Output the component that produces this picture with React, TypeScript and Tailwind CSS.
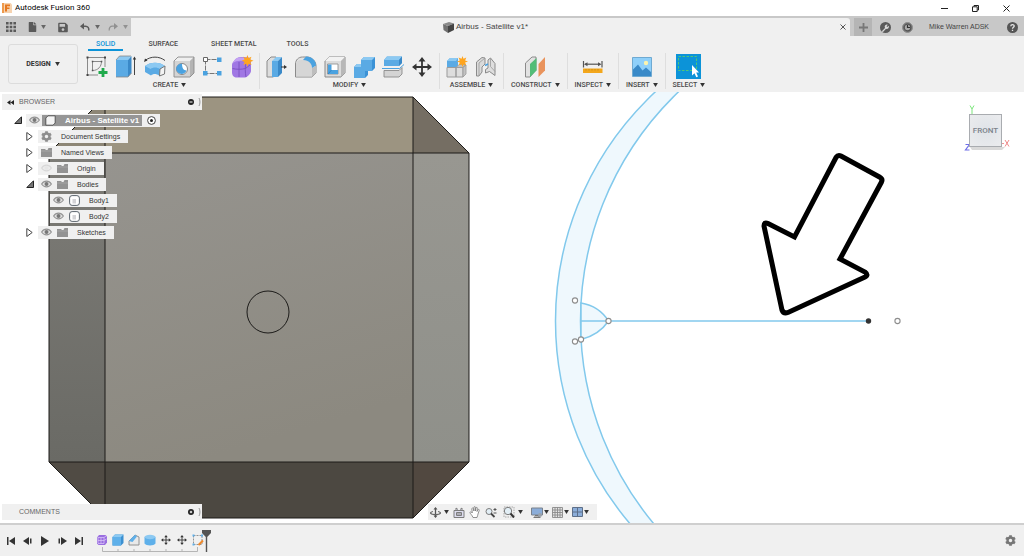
import type { ReactNode } from 'react';
import { FaCog, FaFile, FaFolder, FaSave } from 'react-icons/fa';

type IconProps = { children: ReactNode; size?: string; box?: string };

function Svg({ children, size = 'h-6 w-6', box = '0 0 24 24' }: IconProps) {
  return (
    <svg viewBox={box} className={`${size} block shrink-0`} fill="none" aria-hidden="true">
      {children}
    </svg>
  );
}

function Caret({ className = 'text-[#333]' }: { className?: string }) {
  return (
    <svg viewBox="0 0 6 5" className={`block h-[4px] w-[5px] shrink-0 ${className}`} aria-hidden="true">
      <path d="M0 0h6L3 5z" fill="currentColor" />
    </svg>
  );
}

/* ---------- ribbon icons ---------- */

const SketchIcon = (
  <Svg>
    <path d="M3 2.500h17M2.500 3v17M3 20h10M20 3v9" stroke="#8a8a8a" strokeWidth="1" />
    <path d="M1.500 1.500h2v2h-2zM19 1.500h2v2h-2zM1.500 19h2v2h-2z" fill="#444" />
    <path d="M7.500 6.500h9c0 5-3.500 9-9 9z" stroke="#888" strokeWidth="1" />
    <path d="M6.800 5.800h1.500v1.500H6.800zM15.800 5.800h1.500v1.500h-1.500zM6.800 14.800h1.500v1.500H6.800z" fill="#555" />
    <path d="M18 13v9M13.500 17.500h9" stroke="#1faa4b" strokeWidth="2.800" />
  </Svg>
);

const ExtrudeIcon = (
  <Svg>
    <path d="M2 5l3.500-4H17l-3 4z" fill="#8cc9f2" />
    <path d="M2 5h12v17H2z" fill="#5aaae4" />
    <path d="M14 5l3.500-4v17L14 22z" fill="#3a89c8" />
    <path d="M2 5l3.500-4H17M2 22h12l3.500-4" stroke="#888" strokeWidth=".8" />
    <path d="M20.500 20V4" stroke="#444" />
    <path d="M18.800 4.500l1.700-3 1.700 3z" fill="#333" />
  </Svg>
);

const RevolveIcon = (
  <Svg>
    <path d="M2 5.500C8 1 16 1 22 5.500" stroke="#444" />
    <path d="M1 7l1-3.500 2.500 2z" fill="#333" />
    <path d="M2 11c5-4.500 15-4.500 20 0l-1 8-5 1.500c-2.500-2-6-2-8 0L2 17z" fill="#5aaae4" />
    <path d="M2 11c5-4.500 15-4.500 20 0l-5 3c-3-2-7-2-9.500 0z" fill="#8cc9f2" />
    <path d="M17 14l5-3-.5 8-5 2z" fill="#f4f4f4" stroke="#777" />
  </Svg>
);

const HoleIcon = (
  <Svg>
    <path d="M2 6l4-4h16v16l-4 4H2z" fill="#d4d4d4" />
    <path d="M2 6l4-4h16l-4 4z" fill="#efefef" />
    <path d="M18 6l4-4v16l-4 4z" fill="#b4b4b4" />
    <path d="M2 6l4-4h16v16l-4 4H2z" stroke="#8b8b8b" strokeWidth=".9" />
    <circle cx="10" cy="14" r="5.500" fill="#fff" stroke="#888" />
    <path d="M10 8.800a5 5 0 0 0-1.500 10c2.500.5 5-.8 6-3.300C11.500 15.500 10 13 10 8.800z" fill="#4aa2e0" />
  </Svg>
);

const PatternIcon = (
  <Svg>
    <path d="M4.500 4.500h14M4.500 4.500v14h14" stroke="#777" strokeWidth="1" strokeDasharray="5 1" />
    <path d="M2.500 2.500h4v4h-4z" fill="#fff" stroke="#666" />
    <path d="M16 2.500h4.500V7H16zM2 16h4.500v4.500H2zM16 16h4.500v4.500H16z" fill="#4aa2e0" />
  </Svg>
);

const FormIcon = (
  <Svg>
    <path d="M4 6c2-3 4-4 7-4h5c3 0 5 2 5 5v9c0 2-3 6-6 6.500H7c-3 0-5-2-5-5V10c0-2 1-3 2-4z" fill="#a077e4" />
    <path d="M3 8c3-2.500 9-3 15-1 1-2 1-3 0-4.500h-8C6 2.500 4 5 3 8z" fill="#c3a2f2" />
    <path d="M2.500 13.500c4 1 9 1 13 0l5-4M9 7v15M16 7c-1 5-1 10 0 15" stroke="#7a50c0" strokeWidth=".9" />
    <path d="M17.500 0l1 3 3-1.300L20.300 4.600l3.200 1.200-3.200 1.200 1.200 3-3-1.200-1 3-1.200-3-3 1.200 1.300-3-3-1.200 3-1.200-1.300-2.900 3 1.300z" fill="#ffa51f" />
  </Svg>
);

const PressPullIcon = (
  <Svg>
    <path d="M2 6l4-4h5v18l-3 2H2z" fill="#ddd" stroke="#8b8b8b" />
    <path d="M7 6l4-4h6l-4 4z" fill="#8cc9f2" />
    <path d="M7 6h6v16H7z" fill="#5aaae4" />
    <path d="M13 6l4-4v16l-4 4z" fill="#3a89c8" />
    <path d="M16 12h4" stroke="#333" />
    <path d="M19 10l3 2-3 2z" fill="#333" />
  </Svg>
);

const FilletIcon = (
  <Svg>
    <path d="M1.500 9c0-4 3-7 7-7H14c5 1 8 5 8 9v7l-4 4H1.500z" fill="#e2e2e2" stroke="#8b8b8b" />
    <path d="M2 9c0-2 2-4 5-4h3c5 0 8 3 8 8v8.500H2z" fill="#d6d6d6" />
    <path d="M18 13l4-2v7l-4 4z" fill="#bdbdbd" />
    <path d="M9 5l3-3.500c6 0 10 4 10 9L18 13c0-4-3-8-9-8z" fill="#4aa2e0" />
  </Svg>
);

const ShellIcon = (
  <Svg>
    <path d="M2 6l4-4h16v16l-4 4H2z" fill="#dcdcdc" stroke="#8b8b8b" />
    <path d="M2 6l4-4h16l-4 4z" fill="#f2f2f2" />
    <path d="M18 6l4-4v16l-4 4z" fill="#b7b7b7" />
    <path d="M4.500 9H15v10H4.500z" fill="#fff" stroke="#888" strokeWidth=".8" />
    <path d="M5 9.500h3.500V15H15v4H5z" fill="#4aa2e0" />
    <path d="M5 19l3.500-4" stroke="#2f7fc0" strokeWidth=".8" />
  </Svg>
);

const CombineIcon = (
  <Svg>
    <path d="M2 12l3-3h4V5l3-3h11v11l-3 3h-4v4l-3 3H2z" fill="#3b92d6" />
    <path d="M2 12l3-3h4v3zM9 5l3-3h11l-3 3z" fill="#8cc9f2" />
    <path d="M2 12h7V5h11v11h-7v7H2z" fill="#5aaae4" />
  </Svg>
);

const SplitIcon = (
  <Svg>
    <path d="M3 5l3-3.500h15V8l-3 3H3z" fill="#5aaae4" />
    <path d="M3 5l3-3.500h15L18 5z" fill="#8cc9f2" />
    <path d="M18 5l3-3.500V8l-3 3z" fill="#3a89c8" />
    <path d="M1 13.500h17.500L23 9.500" stroke="#4aa2e0" />
    <path d="M3 15.500h15l3-3V19l-3 3H3z" fill="#d4d4d4" stroke="#8b8b8b" strokeWidth=".9" />
  </Svg>
);

const MoveShape = (
  <>
    <path d="M12 5v14M5 12h14" stroke="#333" strokeWidth="1.800" />
    <path d="M12 2l3.500 4.500h-7zM12 22l3.500-4.500h-7zM2 12l4.500-3.500v7zM22 12l-4.500-3.500v7z" fill="#333" />
  </>
);

const MoveIcon = <Svg>{MoveShape}</Svg>;

const ComponentIcon = (
  <Svg>
    <path d="M2 6l3-3h8v9H2z" fill="#5aaae4" />
    <path d="M2 6l3-3h8l-2 3z" fill="#8cc9f2" />
    <path d="M2 12.500h9V22H2zM11 12.500h7V22h-7z" fill="#ddd" stroke="#9b9b9b" />
    <path d="M18 12.500l3-2.500v9l-3 3zM11 12.500l3-3h6.500l-2.500 3z" fill="#c2c2c2" stroke="#9b9b9b" strokeWidth=".8" />
    <path d="M17.500 1l1 2.800 2.800-1.200-1.200 2.800 2.900 1.100-2.900 1.100 1.200 2.800-2.800-1.200-1 2.800-1-2.800-2.900 1.200 1.200-2.800L12 6.500l2.800-1.100-1.200-2.800 2.900 1.200z" fill="#ffa51f" />
  </Svg>
);

const JointIcon = (
  <Svg>
    <path d="M2.500 7L8 2.500l3 .5v6l-3 3v5l-3 4H2.500z" fill="#dadada" stroke="#8b8b8b" />
    <path d="M5 8l6-5M5 8v12.500" stroke="#9b9b9b" strokeWidth=".8" />
    <path d="M21 20.500v-12L16.500 3 14 5v8l-2.500 1.500V18l4-1.500z" fill="#dedede" stroke="#8b8b8b" />
    <path d="M16.500 3v8.500l4.500 5" stroke="#9b9b9b" strokeWidth=".8" />
    <path d="M11 10.500l3-1.500" stroke="#4aa2e0" strokeWidth="1.500" />
  </Svg>
);

const ConstructIcon = (
  <Svg>
    <path d="M2.500 8L9 2h4v13l-6 7H2.500z" fill="#e2e2e2" stroke="#8b8b8b" />
    <path d="M7 9l6.500-6v12.500L7 22z" fill="#52bd77" />
    <path d="M15.500 9L22 2v13.500L15.500 22z" fill="#e9935c" />
  </Svg>
);

const InspectIcon = (
  <Svg>
    <path d="M2.500 6v6.500M21 6v6.500" stroke="#555" strokeWidth="1.200" />
    <path d="M4 9.200h15" stroke="#555" strokeWidth="1.200" />
    <path d="M3 9.200l3.500-2v4zM20.500 9.200l-3.500-2v4z" fill="#555" />
    <path d="M2 13.500h19.500v4.500H2z" fill="#f3a71c" />
    <path d="M5 14v1.500M8 14v1.500M11 14v1.500M14 14v1.500M17 14v1.500" stroke="#b57c10" strokeWidth=".6" />
  </Svg>
);

const InsertIcon = (
  <Svg>
    <path d="M2.500 2.500h19v19h-19z" fill="#8fd0fa" stroke="#5b9cc9" strokeWidth=".8" />
    <circle cx="16" cy="8" r="2.200" fill="#fbf3ae" />
    <path d="M3 14.500l5-5 4.500 6 3.500-3 5 4.500v4H3z" fill="#3a8ac8" />
  </Svg>
);

const SelectIcon = (
  <Svg size="h-[25px] w-[25px]" box="0 0 25 25">
    <path d="M0 0h25v25H0z" fill="#0c93d8" />
    <path d="M2.500 2.500h18v14h-18z" stroke="#4cc778" strokeDasharray="2.500 1.500" />
    <path d="M16 11v10.500l2.500-2.300 1.800 4 1.700-.8-1.800-3.900H23z" fill="#fff" />
  </Svg>
);

type Group = { label: string; icons: ReactNode[] };

const groups: Group[] = [
  { label: 'CREATE', icons: [SketchIcon, ExtrudeIcon, RevolveIcon, HoleIcon, PatternIcon, FormIcon] },
  { label: 'MODIFY', icons: [PressPullIcon, FilletIcon, ShellIcon, CombineIcon, SplitIcon, MoveIcon] },
  { label: 'ASSEMBLE', icons: [ComponentIcon, JointIcon] },
  { label: 'CONSTRUCT', icons: [ConstructIcon] },
  { label: 'INSPECT', icons: [InspectIcon] },
  { label: 'INSERT', icons: [InsertIcon] },
  { label: 'SELECT', icons: [SelectIcon] },
];

/* ---------- header ---------- */

function TitleBar() {
  return (
    <div className="flex h-4 items-center bg-white pr-[14px] pl-[2px] text-black">
      <Svg size="h-[10px] w-[10px]" box="0 0 10 10">
        <path d="M0 0h8.500L10 1.500V10H0z" fill="#f6d3b0" />
        <path d="M3 8.500v-7h5v1.800H5v1.200h2.500v1.600H5v2.400z" fill="#e5781f" />
        <path d="M0 0h2v10H0z" fill="#ee9a4d" />
      </Svg>
      <span className="ml-[3px] font-['Roboto',sans-serif] text-[8px] leading-4">Autodesk Fusion 360</span>
      <div className="ml-auto flex items-center gap-6">
        <button aria-label="Minimize">
          <Svg size="h-[7px] w-[7px]" box="0 0 7 7"><path d="M0 3.500h7" stroke="#222" /></Svg>
        </button>
        <button aria-label="Restore">
          <Svg size="h-[7px] w-[7px]" box="0 0 7 7">
            <path d="M.5 1.800h4.700v4.700H.5zM2 1.500v-1h4.500V5H5.500" stroke="#222" />
          </Svg>
        </button>
        <button aria-label="Close">
          <Svg size="h-[7px] w-[7px]" box="0 0 7 7"><path d="M.5.5l6 6M6.500.5l-6 6" stroke="#222" /></Svg>
        </button>
      </div>
    </div>
  );
}

function DocumentBar() {
  return (
    <div className="flex h-5 bg-[#c8c8c8] pt-[2px] text-[#5a5a5a]">
      <div className="flex w-[131px] shrink-0 items-center pl-[6px]">
        <button aria-label="Data panel">
          <Svg size="h-[10px] w-[10px]" box="0 0 10 10">
            <path d="M0 0h2.600v2.600H0zM3.700 0h2.600v2.600H3.700zM7.400 0H10v2.600H7.400zM0 3.700h2.600v2.600H0zM3.700 3.700h2.600v2.600H3.700zM7.400 3.700H10v2.600H7.400zM0 7.400h2.600V10H0zM3.700 7.400h2.600V10H3.700zM7.400 7.400H10V10H7.400z" fill="currentColor" />
          </Svg>
        </button>
        <button aria-label="File" className="ml-3 flex items-center gap-1">
          <FaFile className="h-[10px] w-[9px]" />
          <Caret className="text-[#666]" />
        </button>
        <button aria-label="Save" className="ml-3">
          <FaSave className="h-[11px] w-[10px]" />
        </button>
        <button aria-label="Undo" className="ml-3 flex items-center gap-[5px]">
          <Svg size="h-[8px] w-[10px]" box="0 0 10 8">
            <path d="M2 3.200h3.500C8 3.200 9 5 8.800 7.500" stroke="currentColor" strokeWidth="1.500" />
            <path d="M0 3.200L4 0v6.400z" fill="currentColor" />
          </Svg>
          <Caret className="text-[#666]" />
        </button>
        <button aria-label="Redo" className="ml-2 flex items-center gap-[5px] text-[#919191]">
          <Svg size="h-[8px] w-[10px]" box="0 0 10 8">
            <path d="M8 3.200H4.500C2 3.200 1 5 1.200 7.500" stroke="currentColor" strokeWidth="1.200" />
            <path d="M10 3.200L6 0v6.400z" fill="currentColor" />
          </Svg>
          <Caret className="text-[#919191]" />
        </button>
      </div>
      <div className="flex flex-1 items-center rounded-tr-[3px] bg-[#f0f0f0] pr-1">
        <div className="flex flex-1 items-center justify-center gap-[2px]">
          <Svg size="h-[11px] w-[11px]" box="0 0 11 11">
            <path d="M0 2l6-2 5 1.500L5 4z" fill="#8a8a8a" />
            <path d="M0 2l5 2v7L.5 8z" fill="#707070" />
            <path d="M5 4l6-2.500v6.500L5 11z" fill="#444" />
          </Svg>
          <span className="text-[8px] leading-4 text-[#444]">Airbus - Satellite v1*</span>
        </div>
        <button aria-label="Close document" className="text-[#555]">
          <Svg size="h-[6px] w-[6px]" box="0 0 6 6"><path d="M.5.5l5 5M5.500.5l-5 5" stroke="currentColor" /></Svg>
        </button>
      </div>
      <button aria-label="New document" className="ml-1 flex w-[18px] items-center justify-center bg-[#b5b5b5]">
        <Svg size="h-[9px] w-[9px]" box="0 0 9 9"><path d="M4.500 0v9M0 4.500h9" stroke="#777" strokeWidth="1.800" /></Svg>
      </button>
      <div className="flex w-[152px] items-center pr-[6px] pl-2">
        <button aria-label="Extensions">
          <Svg size="h-[11px] w-[11px]" box="0 0 11 11">
            <circle cx="5.500" cy="5.500" r="5.500" fill="#5a5a5a" />
            <path d="M1.500 9.500L5 6a2.300 2.300 0 0 1 2.800-3.300L6.500 4.300l.8.8 1.500-1.300A2.300 2.300 0 0 1 6 6.800L3 10z" fill="#d8d8d8" />
          </Svg>
        </button>
        <button aria-label="Job status" className="ml-[11px]">
          <Svg size="h-[11px] w-[11px]" box="0 0 11 11">
            <circle cx="5.500" cy="5.500" r="5" fill="#777" stroke="#8e8e8e" />
            <circle cx="5.500" cy="5.500" r="3.300" fill="#aaa" stroke="#555" strokeWidth="1.300" />
            <path d="M5.500 3v2.500H8" stroke="#333" strokeWidth="1.200" />
          </Svg>
        </button>
        <button className="ml-4 text-[7px] leading-4 whitespace-nowrap text-[#444]">Mike Warren ADSK</button>
        <button aria-label="Help" className="ml-auto">
          <Svg size="h-[11px] w-[11px]" box="0 0 11 11">
            <circle cx="5.500" cy="5.500" r="5.500" fill="#555" />
            <path d="M3.800 4.300c0-2.300 3.400-2.200 3.400-.2 0 1.300-1.700 1.200-1.700 2.700M5.500 7.700v1.300" stroke="#e6e6e6" strokeWidth="1.300" />
          </Svg>
        </button>
      </div>
    </div>
  );
}

function Ribbon() {
  return (
    <div className="flex h-14 bg-[#f0f0f0] pl-2 font-['Roboto',sans-serif] text-[7px] font-medium text-[#4a4a4a]">
      <button className="mt-2 flex h-10 w-[70px] shrink-0 items-center justify-center gap-1 rounded-[3px] border border-[#dcdcdc] font-bold text-[#333]">
        DESIGN <Caret />
      </button>
      <div className="ml-[2px] flex flex-col pt-[2px]">
        <div className="flex h-[13px] gap-4 pl-2 leading-3" role="tablist">
          <button role="tab" aria-selected="true" className="border-b-2 border-[#0c93d8] px-2 text-[#0c93d8]">SOLID</button>
          <button role="tab" aria-selected="false" className="border-b-2 border-transparent px-[9px]">SURFACE</button>
          <button role="tab" aria-selected="false" className="border-b-2 border-transparent px-2">SHEET METAL</button>
          <button role="tab" aria-selected="false" className="border-b-2 border-transparent px-[6px]">TOOLS</button>
        </div>
        <div className="flex pt-[2px]">
          {groups.map((g) => (
            <div
              key={g.label}
              className="flex h-9 flex-col items-center border-r border-[#dedede] px-[5px] last:border-transparent"
            >
              <div className="flex h-[27px] shrink-0 items-center gap-[5px]">
                {g.icons.map((icon, i) => (
                  <button key={i} aria-label={`${g.label} tool ${i + 1}`}>{icon}</button>
                ))}
              </div>
              <button className="flex items-center gap-[3px] px-[2px] leading-[10px]">
                {g.label} <Caret />
              </button>
            </div>
          ))}
        </div>
      </div>
    </div>
  );
}

/* ---------- scene ---------- */

function Scene() {
  return (
    <svg
      viewBox="0 92 1024 431"
      preserveAspectRatio="xMidYMid slice"
      className="absolute inset-0 h-full w-full"
      role="img"
      aria-label="Satellite body and sketch profile"
    >
      <defs>
        <linearGradient id="front" x1="0" y1="0" x2="0.300" y2="1">
          <stop offset="0" stopColor="#96948f" />
          <stop offset="1" stopColor="#8c8980" />
        </linearGradient>
        <linearGradient id="left" x1="0" y1="0" x2="0" y2="1">
          <stop offset="0" stopColor="#7d7c77" />
          <stop offset="1" stopColor="#6a6a65" />
        </linearGradient>
        <linearGradient id="right" x1="0" y1="0" x2="0" y2="1">
          <stop offset="0" stopColor="#989791" />
          <stop offset="1" stopColor="#8f908a" />
        </linearGradient>
      </defs>
      <path d="M105 97H413V153H105z" fill="#9c9481" />
      <path d="M105 97V153H49z" fill="#8d8676" />
      <path d="M413 97L469 153H413z" fill="#756e63" />
      <path d="M105 153H413V462H105z" fill="url(#front)" />
      <path d="M49 153H105V462H49z" fill="url(#left)" />
      <path d="M413 153H469V462H413z" fill="url(#right)" />
      <path d="M105 462H413V518H105z" fill="#4c4841" />
      <path d="M49 462H105V518z" fill="#504b44" />
      <path d="M413 462H469L413 518z" fill="#514840" />
      <path
        d="M105 97H413L469 153V462L413 518H105L49 462V153zM49 153H469M49 462H469M105 97V518M413 97V518"
        fill="none"
        stroke="#1c1b19"
        strokeWidth="1"
      />
      <circle cx="268" cy="312" r="21" fill="none" stroke="#1c1b19" strokeWidth="1" />

      <g stroke="#82c9ec" strokeWidth="1.500">
        <path
          d="M868.500 8A313 313 0 0 0 868.500 634L897.500 638A317 317 0 0 1 897.500 4z"
          fill="#eff8fd"
        />
        <path d="M581 303Q599 306 608.500 321Q599 335 581 339.500z" fill="#eff8fd" />
        <path d="M581 321H868" />
      </g>
      <g fill="#fff" stroke="#8d8d8d" strokeWidth="1.100">
        <circle cx="575" cy="300.500" r="2.600" />
        <circle cx="575" cy="341.500" r="2.600" />
        <circle cx="581" cy="339.500" r="2.600" />
        <circle cx="608.500" cy="321" r="2.600" />
        <circle cx="897.500" cy="321" r="2.600" />
      </g>
      <circle cx="868.500" cy="321" r="2.700" fill="#333" />

      <path
        d="M836 157.500Q838 154.500 841 156L879.500 177Q883 179 881.500 182L840 259L865 272Q869 275 865 277L788 312.500Q783.500 314 782 310L764 226Q764 221.500 768 223.500L794.500 237z"
        fill="#fff"
        stroke="#000"
        strokeWidth="5"
      />
    </svg>
  );
}

function ViewCube() {
  return (
    <div className="absolute top-3 right-[14px] h-[50px] w-[46px]">
      <svg viewBox="0 0 46 50" className="absolute inset-0 h-full w-full" aria-hidden="true">
        <path d="M6 43h35l-3 3H8z" fill="#d9d9d9" />
        <path d="M8 5v6M6 1.500l2 3.500 2-3.500" stroke="#7ce67c" fill="none" />
        <path d="M38 39.500h2" stroke="#f09a9a" />
        <path d="M41 36l4 6.500M45 36l-4 6.500" stroke="#ef8a8a" />
        <path d="M1.500 40.500h4l-4 5.500h4" stroke="#6f6fe8" fill="none" strokeWidth="1.200" />
      </svg>
      <button className="absolute top-[10px] left-[5px] h-[33px] w-[33px] border border-[#a9acb0] bg-radial from-[#dfe3e8] to-[#ebecee] text-center font-['Roboto',sans-serif] text-[8px] font-medium text-[#7c838b]">
        FRONT
      </button>
    </div>
  );
}

/* ---------- browser tree ---------- */

function Eye({ faded = false }: { faded?: boolean }) {
  return (
    <Svg size="h-[8px] w-[11px]" box="0 0 11 8">
      <g className={faded ? 'opacity-25' : ''}>
        <path d="M.6 4C3 .2 8 .2 10.400 4 8 7.800 3 7.800.6 4z" fill="#e4e4e4" stroke="#959595" strokeWidth="1.100" />
        <circle cx="5.500" cy="4" r="2" fill={faded ? '#ccc' : '#777'} />
      </g>
    </Svg>
  );
}

function BodyGlyph() {
  return (
    <Svg size="h-[11px] w-[11px]" box="0 0 11 11">
      <rect x=".6" y=".6" width="9.800" height="9.800" rx="2.500" fill="#fff" stroke="#59626b" strokeWidth="1" />
      <path d="M3.500 4h3.500v4.500H3.500z" fill="#d3d3d6" />
    </Svg>
  );
}

function ComponentGlyph() {
  return (
    <Svg size="h-[11px] w-[11px]" box="0 0 11 11">
      <path d="M.8 3L3 .8h7.200V8L8 10.200H.8z" fill="#f4f4f4" stroke="#555" strokeWidth="1" />
    </Svg>
  );
}

function FolderGlyph() {
  return (
    <Svg size="h-[9px] w-[11px]" box="0 0 11 9">
      <path d="M0 1h4l1 1h1.500L7.500 0H11v9H0z" fill="#939393" />
      <path d="M0 3h11" stroke="#a9a9a9" strokeWidth=".8" />
    </Svg>
  );
}

type Row = {
  label: string;
  indent: string;
  toggle?: 'open' | 'closed';
  eye?: 'on' | 'off';
  glyph: 'component' | 'gear' | 'folder' | 'body';
};

const rows: Row[] = [
  { label: 'Airbus - Satellite v1', indent: 'pl-3', toggle: 'open', eye: 'on', glyph: 'component' },
  { label: 'Document Settings', indent: 'pl-6', toggle: 'closed', glyph: 'gear' },
  { label: 'Named Views', indent: 'pl-6', toggle: 'closed', glyph: 'folder' },
  { label: 'Origin', indent: 'pl-6', toggle: 'closed', eye: 'off', glyph: 'folder' },
  { label: 'Bodies', indent: 'pl-6', toggle: 'open', eye: 'on', glyph: 'folder' },
  { label: 'Body1', indent: 'pl-9', eye: 'on', glyph: 'body' },
  { label: 'Body2', indent: 'pl-9', eye: 'on', glyph: 'body' },
  { label: 'Sketches', indent: 'pl-6', toggle: 'closed', eye: 'on', glyph: 'folder' },
];

function TreeRow({ row }: { row: Row }) {
  const root = row.glyph === 'component';
  return (
    <li className={`flex h-4 items-center ${row.indent}`}>
      <button aria-label={`Toggle ${row.label}`} className="flex w-[14px] shrink-0 items-center pl-[2px]">
        {row.toggle === 'closed' && (
          <Svg size="h-[9px] w-[7px]" box="0 0 7 9">
            <path d="M.8.5v8L6.200 4.500z" fill="#fff" stroke="#444" />
          </Svg>
        )}
        {row.toggle === 'open' && (
          <Svg size="h-[8px] w-[8px]" box="0 0 8 8">
            <path d="M7.500.8v6.700H.8z" fill="#777" stroke="#222" />
          </Svg>
        )}
      </button>
      <div className="flex h-[13px] items-center bg-[#f0f0f0]">
        {row.eye && (
          <button aria-label={`Show ${row.label}`} className="flex w-4 shrink-0 justify-center">
            <Eye faded={row.eye === 'off'} />
          </button>
        )}
        <div className={`flex h-[11px] items-center ${root ? 'bg-[#969696] text-white' : ''}`}>
          <span className="flex w-4 shrink-0 justify-center">
            {row.glyph === 'component' && <ComponentGlyph />}
            {row.glyph === 'body' && <BodyGlyph />}
            {row.glyph === 'folder' && <FolderGlyph />}
            {row.glyph === 'gear' && <FaCog className="h-[11px] w-[11px] text-[#8e8e8e]" />}
          </span>
          <span className={`pl-[7px] leading-[11px] whitespace-nowrap ${root ? 'pr-[3px] text-[8px] font-bold' : 'pr-2 text-[7px]'}`}>
            {row.label}
          </span>
        </div>
        {root && (
          <button aria-label="Activate component" className="flex w-[18px] justify-center">
            <Svg size="h-[9px] w-[9px]" box="0 0 9 9">
              <circle cx="4.500" cy="4.500" r="3.900" fill="#fff" stroke="#444" />
              <circle cx="4.500" cy="4.500" r="1.500" fill="#222" />
            </Svg>
          </button>
        )}
      </div>
    </li>
  );
}

function PanelHeader({ title, collapse, sign }: { title: string; collapse?: boolean; sign: 'minus' | 'plus' }) {
  return (
    <div className="ml-[2px] flex h-4 w-[200px] items-center bg-[#f0f0f0] pr-px text-[7px] text-[#666]">
      <div className="flex w-[17px] shrink-0 justify-center">
        {collapse && (
          <button aria-label="Collapse browser">
            <Svg size="h-[5px] w-[7px]" box="0 0 7 5">
              <path d="M3.500 0v5L0 2.500zM7 0v5L3.500 2.500z" fill="#222" />
            </Svg>
          </button>
        )}
      </div>
      <span className="leading-4">{title}</span>
      <button aria-label={`${title} options`} className="ml-auto">
        <Svg size="h-[6px] w-[6px]" box="0 0 6 6">
          <circle cx="3" cy="3" r="3" fill="#222" />
          <path d={sign === 'minus' ? 'M1.500 3h3' : 'M1.800 3h2.400M3 1.800v2.400'} stroke="#fff" />
        </Svg>
      </button>
      <Svg size="ml-1 h-[8px] w-[3px]" box="0 0 3 8">
        <path d="M1 0c1.300 2 1.300 6 0 8" stroke="#999" />
      </Svg>
    </div>
  );
}

/* ---------- navigation bar ---------- */

const navStroke = '#7c7c7c';

function NavBar() {
  return (
    <div className="flex h-4 items-center gap-1 bg-[#f0f0f0] pr-2 pl-[2px]">
      <button aria-label="Orbit" className="flex items-center gap-[3px]">
        <Svg size="h-[11px] w-[11px]" box="0 0 11 11">
          <path d="M5.500 1v9" stroke="#555" strokeWidth="1.300" />
          <path d="M5.500 0l2 2.500h-4zM5.500 11l2-2.500h-4z" fill="#555" />
          <path d="M3 4.500C-1 5.500 0 7.500 5.500 7.500s6.500-2 2.500-3" stroke="#666" strokeWidth="1.200" />
        </Svg>
        <Caret />
      </button>
      <button aria-label="Look at">
        <Svg size="h-[11px] w-[12px]" box="0 0 12 11">
          <path d="M1 3.500h10v7H1zM3 3.500V1l2 1.500M9 3.500V1L7 2.500M3.500 5.500h5v3h-5z" stroke={navStroke} fill="#dde" />
          <path d="M3.500 7h5" stroke={navStroke} />
        </Svg>
      </button>
      <button aria-label="Pan">
        <Svg size="h-[12px] w-[12px]" box="0 0 12 12">
          <path d="M4 11.500C3 9 1.500 8 .8 6.500c.8-1 1.800-.5 2.500.5L2.800 2.500c.8-1 1.500-.3 1.700.5l.4 2V1c.8-.8 1.500-.4 1.500.4V5l.6-3.300c.8-.6 1.500-.2 1.400.6L8 5.500l1.200-2c.8-.3 1.300.2 1 1L9 8c0 1.500-.8 2-1 3.500z" fill="#fff" stroke="#777" strokeWidth=".8" />
        </Svg>
      </button>
      <button aria-label="Zoom">
        <Svg size="h-[11px] w-[12px]" box="0 0 12 11">
          <circle cx="4" cy="4.500" r="3" fill="#e2eef5" stroke={navStroke} />
          <path d="M6 6.500l3.500 3.500" stroke="#444" strokeWidth="1.800" />
          <path d="M10 1v3M8.500 2.500h3M8.500 6h3" stroke="#555" />
        </Svg>
      </button>
      <button aria-label="Zoom window" className="ml-[2px] flex items-center gap-[3px]">
        <Svg size="h-[12px] w-[12px]" box="0 0 12 12">
          <path d="M1 1h10v10H1z" stroke="#aaa" strokeDasharray="1.500 1" />
          <circle cx="5" cy="5" r="3.700" fill="#e2eef5" stroke={navStroke} />
          <path d="M7.500 7.500l3.500 4" stroke="#333" strokeWidth="2" />
        </Svg>
        <Caret />
      </button>
      <button aria-label="Display settings" className="ml-1 flex items-center gap-px">
        <Svg size="h-[11px] w-[12px]" box="0 0 12 11">
          <path d="M.5 1h11v7H.5z" fill="#8badd9" stroke="#7a828d" />
          <path d="M4 8.500h4V10H3M2.500 10.500h7" stroke="#777" />
          <circle cx="9" cy="8" r="2" fill="#9aa2ac" />
        </Svg>
        <Caret />
      </button>
      <button aria-label="Grid and snaps" className="-ml-px flex items-center gap-px">
        <Svg size="h-[11px] w-[11px]" box="0 0 11 11">
          <path d="M.5.5h10v10H.5zM3 .5v10M5.500.5v10M8 .5v10M.5 3h10M.5 5.500h10M.5 8h10" fill="#e4e4e4" stroke="#8a8a8a" strokeWidth=".9" />
        </Svg>
        <Caret />
      </button>
      <button aria-label="Viewports" className="-ml-px flex items-center gap-px">
        <Svg size="h-[10px] w-[11px]" box="0 0 11 10">
          <path d="M.5.5h10v9H.5zM5.500.5v9M.5 5h10" fill="#8badd9" stroke="#5d6f89" />
        </Svg>
        <Caret />
      </button>
    </div>
  );
}

/* ---------- timeline ---------- */

const transport: { label: string; path: string }[] = [
  { label: 'Go to start', path: 'M1 1h1.500v8H1zM9 1v8L3 5z' },
  { label: 'Step back', path: 'M6 1v8L0 5zM7 2.500h1.500v5H7z' },
  { label: 'Play', path: 'M1 0v10l8-5z' },
  { label: 'Step forward', path: 'M4 1v8l6-4zM1.500 2.500H3v5H1.500z' },
  { label: 'Go to end', path: 'M1 1v8l6-4zM7.500 1H9v8H7.500z' },
];

const SmallMove = <Svg size="h-3 w-3">{MoveShape}</Svg>;

const features: { label: string; icon: ReactNode }[] = [
  {
    label: 'Form',
    icon: (
      <Svg size="h-3 w-3" box="0 0 12 12">
        <path d="M1 3.500L3 1h6.500L11 2.500V8.500L9 11H2.500L1 9.500z" fill="#9a6ee0" />
        <path d="M2 3.500h6v6H2zM8 3.500L10 2M5 3.500v6M2 6.500h6l2.500-1.500" stroke="#d7c2f6" strokeWidth=".8" />
      </Svg>
    ),
  },
  {
    label: 'Box',
    icon: (
      <Svg size="h-3 w-3" box="0 0 12 12">
        <path d="M.5 3l2.500-2.500h8.500V9L9 11.500H.5z" fill="#3b8fd0" />
        <path d="M.5 3h8.500v8.500H.5z" fill="#5fb0ea" />
        <path d="M.5 3L3 .5h8.500L9 3z" fill="#8cc9f2" />
      </Svg>
    ),
  },
  {
    label: 'Chamfer',
    icon: (
      <Svg size="h-3 w-3" box="0 0 12 12">
        <path d="M1 7l6-6 4 2v8H1z" fill="#e9e9e9" stroke="#888" strokeWidth=".9" />
        <path d="M.8 7L7 .8l2 1.700L4.500 8z" fill="#5fb0ea" />
      </Svg>
    ),
  },
  {
    label: 'Cylinder',
    icon: (
      <Svg size="h-3 w-3" box="0 0 12 12">
        <path d="M.5 3v6.500c1.500 2.500 9.500 2.500 11 0V3z" fill="#5fb0ea" />
        <ellipse cx="6" cy="3" rx="5.500" ry="2.200" fill="#8cc9f2" />
      </Svg>
    ),
  },
  { label: 'Move', icon: SmallMove },
  { label: 'Move', icon: SmallMove },
  {
    label: 'Sketch',
    icon: (
      <Svg size="h-3 w-3" box="0 0 12 12">
        <path d="M1.500 1.500h8.500v9H1.500z" stroke="#888" strokeWidth=".9" strokeDasharray="2 1" />
        <path d="M.5.500h2v2h-2zM9 .5h2v2H9zM.5 9.500h2v2h-2z" fill="#5fb0ea" />
        <path d="M6.500 11l4.500-4.500" stroke="#f08a2c" strokeWidth="2" />
      </Svg>
    ),
  },
];

function Timeline() {
  return (
    <div className="flex h-[33px] shrink-0 items-center border-t-2 border-[#cfcfcf] bg-[#f0f0f0] pr-2 pl-[6px]">
      <div className="flex items-center gap-[7px]">
        {transport.map((t) => (
          <button key={t.label} aria-label={t.label}>
            <Svg size="h-[10px] w-[10px]" box="0 0 10 10"><path d={t.path} fill="#333" /></Svg>
          </button>
        ))}
      </div>
      <ol className="relative mt-[5px] ml-3 flex h-[18px] gap-1">
        {features.map((f, i) => (
          <li key={i} className="flex flex-col items-center">
            <button aria-label={f.label}>{f.icon}</button>
          </li>
        ))}
        <li className="absolute right-[6px] bottom-0 left-[6px]">
          <Svg size="h-[5px] w-full" box="0 0 96 5">
            <path d="M.5 0v4.500h95V0M16 2v2.500M32 2v2.500M48 2v2.500M64 2v2.500M80 2v2.500" stroke="#b5b5b5" />
          </Svg>
        </li>
        <li className="absolute -top-[4px] -right-[7px]">
          <Svg size="h-[22px] w-[9px]" box="0 0 9 22">
            <path d="M0 0h9v3L5.200 7v15H3.800V7L0 3z" fill="#555" />
          </Svg>
        </li>
      </ol>
      <button aria-label="Timeline settings" className="ml-auto">
        <FaCog className="h-[11px] w-[11px] text-[#777]" />
      </button>
    </div>
  );
}

export default function App() {
  return (
    <div className="flex h-screen flex-col overflow-hidden bg-white font-['Liberation_Sans',Arial,sans-serif] text-[#333]">
      <header className="shrink-0">
        <TitleBar />
        <DocumentBar />
        <Ribbon />
      </header>
      <main className="relative min-h-0 flex-1 overflow-hidden">
        <Scene />
        <div className="relative flex h-full flex-col justify-between pt-[2px] pb-[3px]">
          <section>
            <PanelHeader title="BROWSER" collapse sign="minus" />
            <ul className="pt-[2px]">
              {rows.map((row) => (
                <TreeRow key={row.label} row={row} />
              ))}
            </ul>
          </section>
          <div className="grid grid-cols-[1fr_auto_1fr] items-center">
            <PanelHeader title="COMMENTS" sign="plus" />
            <NavBar />
          </div>
        </div>
        <ViewCube />
      </main>
      <Timeline />
    </div>
  );
}
